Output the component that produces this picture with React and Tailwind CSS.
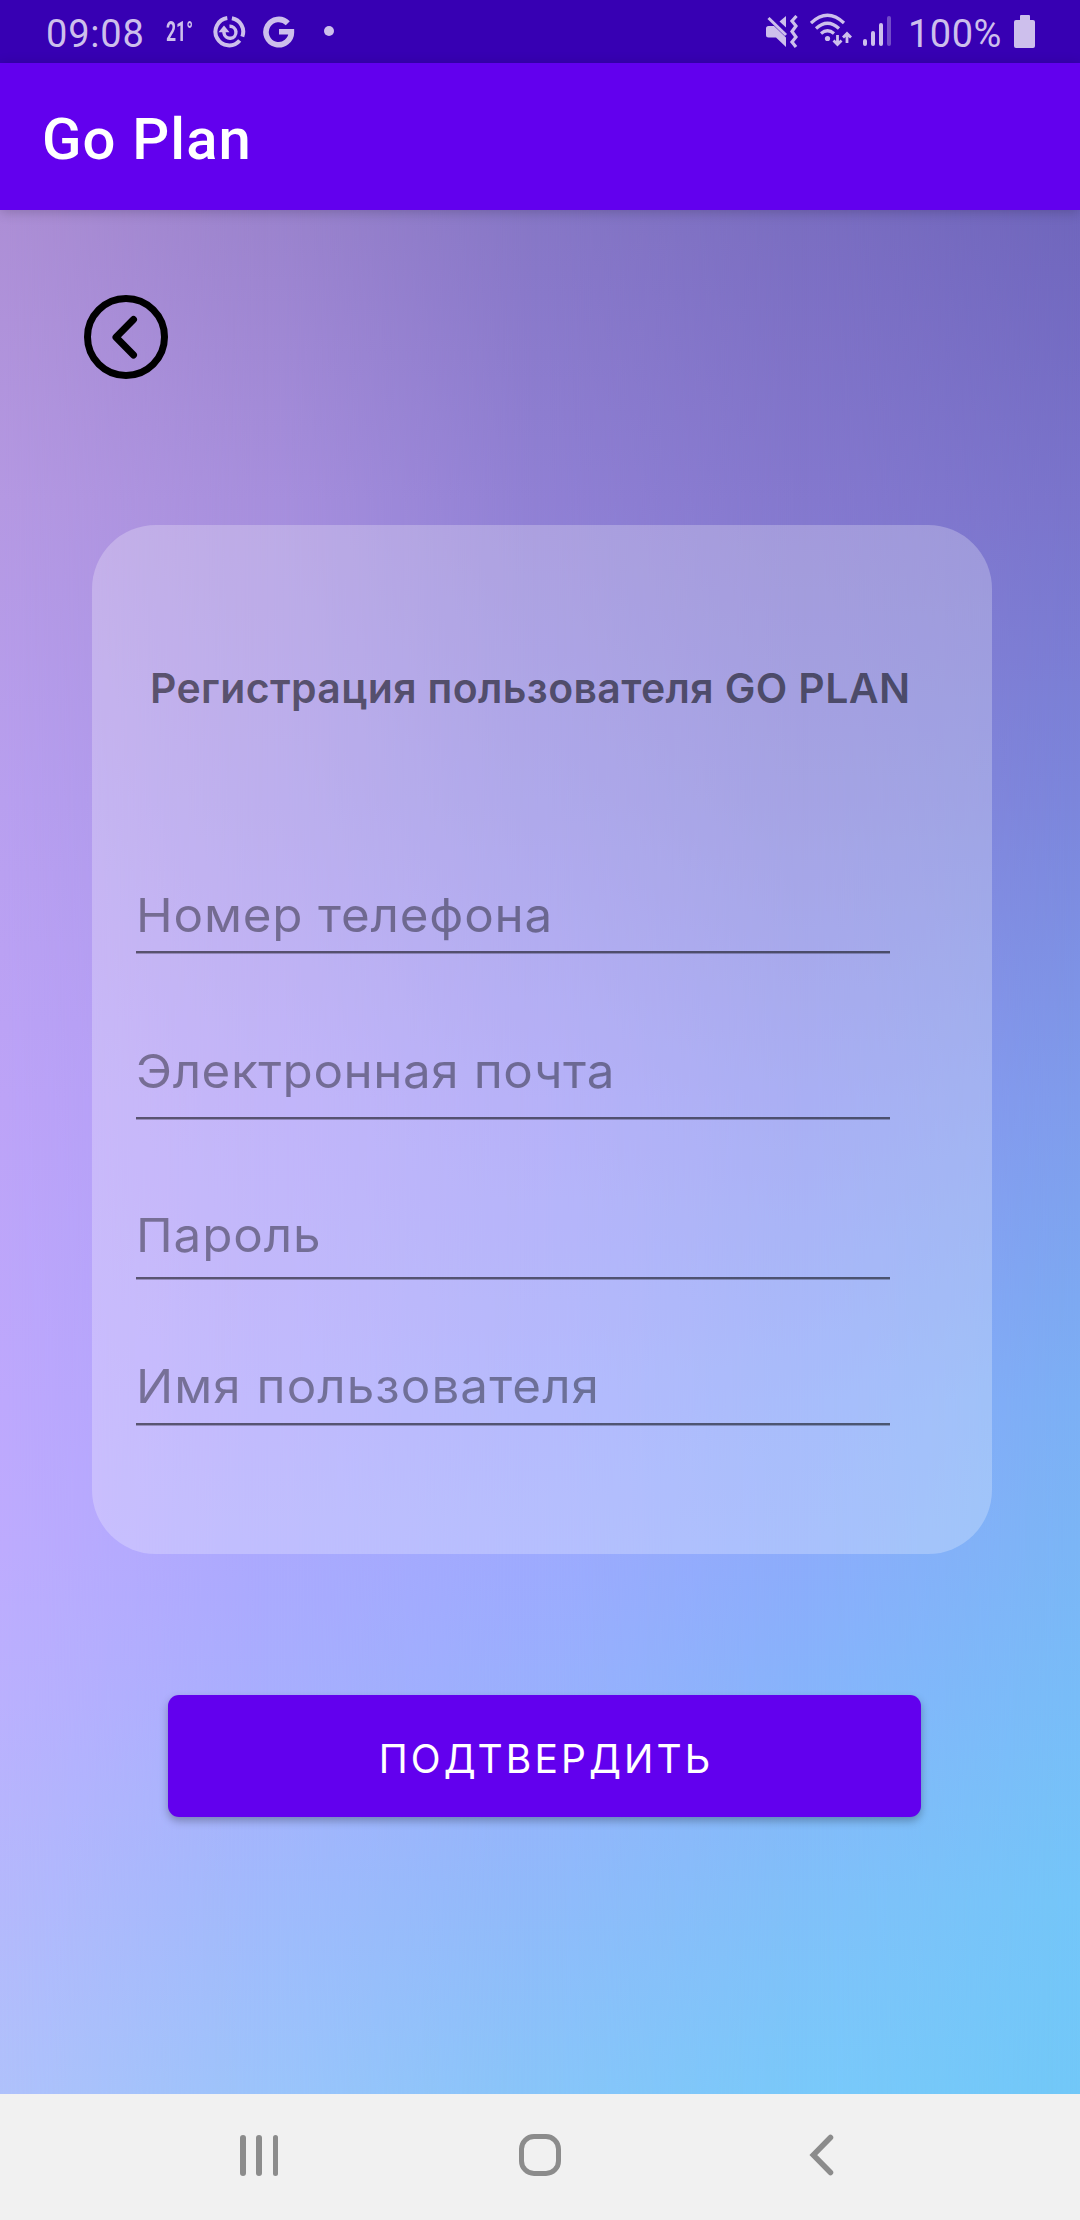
function Background() {
  return (
    <div className="absolute inset-0">
      <div className="absolute inset-0 bg-[linear-gradient(180deg,#7066bd_0%,#7a74cc_15.4%,#7c86dc_31.3%,#7f9cec_47.2%,#7cb0f5_63.2%,#7bb6f6_71%,#78bdf8_79%,#74c6f9_89.7%,#72c8f8_100%)]" />
      <div className="absolute inset-0 bg-[linear-gradient(180deg,#7a6dc1_0%,#8478ce_15.4%,#8785db_31.3%,#8d95f0_47.2%,#8ba7fa_63.2%,#8cacfb_71%,#86b4fb_79%,#80c0f9_89.7%,#79c9fa_100%)] [mask-image:linear-gradient(90deg,#000_75%,transparent_100%)]" />
      <div className="absolute inset-0 bg-[linear-gradient(180deg,#8676c6_0%,#9080d4_15.4%,#948ce4_31.3%,#9f98f6_47.2%,#9da4fc_63.2%,#9eaafe_71%,#99b0fd_79%,#90bafa_89.7%,#88c5f9_100%)] [mask-image:linear-gradient(90deg,#000_50%,transparent_75%)]" />
      <div className="absolute inset-0 bg-[linear-gradient(180deg,#9b83cd_0%,#a78fdd_15.4%,#a795e8_31.3%,#ae9df7_47.2%,#ada4fc_63.2%,#aba9fe_71%,#a8aefe_79%,#a0bafc_89.7%,#9bc4fb_100%)] [mask-image:linear-gradient(90deg,#000_25%,transparent_50%)]" />
      <div className="absolute inset-0 bg-[linear-gradient(180deg,#ac8ed5_0%,#b498e2_15.4%,#b89fef_31.3%,#bca3f7_47.2%,#bda8fd_63.2%,#bdabfe_71%,#bab0fe_79%,#b4b8fc_89.7%,#afc1fb_100%)] [mask-image:linear-gradient(90deg,#000_0%,transparent_25%)]" />
    </div>
  );
}

function StatusBar() {
  return (
    <header className="flex h-[63px] items-start bg-[#3700b3] text-[#cdbfec]">
      <span className="ml-[46px] mt-[5px] w-[98px] font-['Roboto',sans-serif] text-[38px] leading-[58px] tracking-[0.8px]">09:08</span>
      <span className="ml-[22px] mt-[3px] w-[26px] origin-left scale-x-[0.63] whitespace-nowrap font-['Roboto',sans-serif] text-[28px] font-bold leading-[58px]">21°</span>
      <svg className="ml-[21px] mt-[15px] size-[33px]" viewBox="0 0 33 33" fill="none" stroke="currentColor" strokeWidth="4">
        <path d="M18.900 3.200A13.700 13.700 0 0 1 29.300 21.600" />
        <path d="M26.700 25.400A13.700 13.700 0 1 1 14.300 3.100" />
        <path d="M16.500 11.300A6 6 0 1 1 11 18V14.600" strokeWidth="3.400" />
        <path d="M11 10.500L16.500 17.200H5.500Z" fill="currentColor" stroke="none" />
      </svg>
      <svg className="ml-[17px] mt-[16px] size-[32px]" viewBox="0 0 32 32" fill="none" stroke="currentColor" strokeWidth="5.6">
        <path d="M24.800 7.200A12.700 12.700 0 1 0 28.400 15.800H16" />
      </svg>
      <span className="ml-[29px] mt-[26px] size-[10px] rounded-full bg-current" />

      <svg className="ml-auto mt-[15px] h-[33px] w-[32px]" viewBox="0 0 32 33" fill="currentColor">
        <path d="M0 13.500Q0 11 2.500 11H8L20 22.500V32L10 22.500H2.500Q0 22.500 0 20Z" />
        <path d="M20 1V12.500L13.500 6.500Z" />
        <path d="M2.500 3L20 20" stroke="currentColor" strokeWidth="3" />
        <path d="M30.500 1L26 6L30 11L26 16.500L30 22L26 27L30 32" fill="none" stroke="currentColor" strokeWidth="3.200" />
      </svg>
      <svg className="ml-[12px] mt-[13px] h-[34px] w-[42px]" viewBox="0 0 42 34" fill="none" stroke="currentColor" strokeWidth="3.2">
        <path d="M1 10Q17.500 -5.500 34 10" />
        <path d="M6 15.500Q17.500 5 29 15.500" />
        <path d="M11 20.500Q17.500 15 24 20.500" />
        <circle cx="17.500" cy="25.500" r="2.600" fill="currentColor" stroke="none" />
        <path d="M27.500 22V31.500M23.500 27.500L27.500 31.500L31.500 27.500M37 30V20.500M33 24.500L37 20.500L41 24.500" strokeWidth="2.800" />
      </svg>
      <div className="ml-[11px] mt-[16px] flex h-[30px] items-end gap-1">
        <span className="h-[7px] w-1 rounded-sm bg-current" />
        <span className="h-[15px] w-1 rounded-sm bg-current" />
        <span className="h-[23px] w-1 rounded-sm bg-current" />
        <span className="h-[30px] w-1 rounded-sm bg-current opacity-40" />
      </div>
      <span className="ml-[17px] mt-[5px] w-[95px] font-['Roboto',sans-serif] text-[38px] leading-[58px] tracking-[0.5px]">100%</span>
      <div className="ml-[11px] mr-[45px] mt-[15px] flex flex-col items-center">
        <span className="h-[5px] w-[10px] rounded-t-[1px] bg-current" />
        <span className="h-[28px] w-[21px] rounded-[2px] bg-current" />
      </div>
    </header>
  );
}

function Field({ label, className }) {
  return (
    <div className={`w-[754px] whitespace-nowrap border-b-2 border-black/55 text-[47px] leading-[60px] text-black/40 shadow-[0_1px_0_rgba(0,0,0,0.25)] ${className}`}>
      <span className="inline-block origin-left scale-x-105">{label}</span>
    </div>
  );
}

export default function App() {
  return (
    <div className="flex h-[2220px] w-[1080px] flex-col overflow-hidden font-['Inter',sans-serif]">
      <StatusBar />
      <div className="z-10 flex h-[147px] items-center bg-[#6200ee] pl-[42px] pt-[5px] font-['Roboto',sans-serif] text-[58px] font-medium leading-none tracking-[1.1px] text-white shadow-[0_2px_12px_rgba(0,0,0,0.2)]">
        Go Plan
      </div>
      <main className="relative h-[1884px]">
        <Background />
        <div className="relative flex flex-col">
          <button className="ml-[84px] mt-[85px] size-[84px]" aria-label="Back">
            <svg className="size-[84px]" viewBox="0 0 84 84" fill="none" stroke="#000" strokeWidth="7">
              <circle cx="42" cy="42" r="38.500" />
              <path d="M49.500 24.500L32 42.200L49.500 60" strokeLinecap="round" strokeLinejoin="round" />
            </svg>
          </button>
          <section className="ml-[92px] mt-[146px] h-[1029px] w-[900px] rounded-[64px] bg-white/25 pl-[44px] pt-[133px]">
            <h1 className="ml-[14px] whitespace-nowrap text-[41px] font-semibold leading-[60px] tracking-[0.36px] text-black/55">Регистрация пользователя GO PLAN</h1>
            <Field label="Номер телефона" className="mt-[167px] h-[68px] tracking-[0.77px]" />
            <Field label="Электронная почта" className="mt-[88px] h-[78px] tracking-[0.55px]" />
            <Field label="Пароль" className="mt-[86px] h-[74px] tracking-[0.84px]" />
            <Field label="Имя пользователя" className="mt-[77px] h-[69px] tracking-[1px]" />
          </section>
          <button className="ml-[168px] mt-[141px] h-[122px] w-[753px] rounded-[11px] bg-[#6200ee] pl-[3px] pt-[6px] text-[39px] tracking-[3.1px] text-white shadow-[0_4px_8px_rgba(0,0,0,0.28)]">
            ПОДТВЕРДИТЬ
          </button>
        </div>
      </main>
      <nav className="flex h-[126px] items-start bg-[#f1f1f1] pl-[240px] pt-[40px] text-[#8c8c8c]">
        <div className="flex h-[42px] w-[38px] items-center justify-between">
          <span className="h-[41px] w-[5.500px] rounded-full bg-current" />
          <span className="h-[41px] w-[5.500px] rounded-full bg-current" />
          <span className="h-[41px] w-[5.500px] rounded-full bg-current" />
        </div>
        <span className="ml-[241px] size-[42px] rounded-[15px] border-[5px] border-current" />
        <svg className="ml-[248px] h-[42px] w-[26px]" viewBox="0 0 26 42" fill="none" stroke="currentColor" strokeWidth="5.5">
          <path d="M21.500 3.500L4.300 21L21.500 38.500" strokeLinecap="round" />
        </svg>
      </nav>
    </div>
  );
}
